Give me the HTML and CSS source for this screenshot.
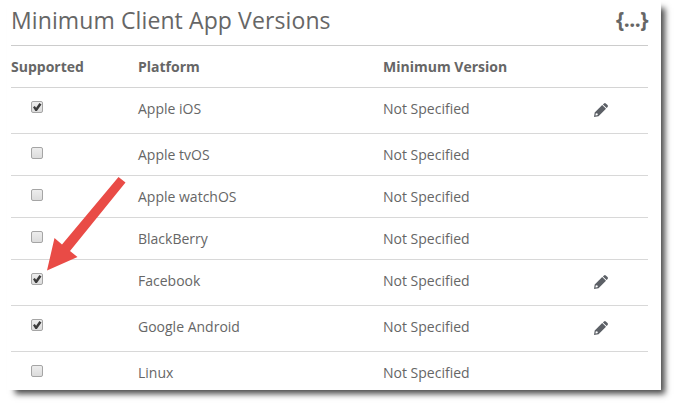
FILE: index.html
```html
<!DOCTYPE html>
<html lang="en">
<head>
<meta charset="utf-8">
<title>Minimum Client App Versions</title>
<link rel="stylesheet" href="styles.css">
</head>
<body>
<svg class="defs" width="0" height="0" aria-hidden="true">
  <symbol id="pencil" viewBox="0 0 14 14">
    <path fill-rule="evenodd" d="M0 14 L.7 9.4 L8.2 2 L12 5.8 L4.5 13.3 Z M1.9 10.2 L1.4 12.2 L1.9 12.6 L3.8 12 L3.5 10.6 Z M8.9 1.4 L10 .4 Q11 -.3 11.8 .4 L13.5 2.1 Q14.3 3 13.6 3.9 L12.6 5.1 Z"/>
  </symbol>
</svg>
<main class="card">
  <header class="head">
    <h1>Minimum Client App Versions</h1>
    <span class="json">{...}</span>
  </header>
  <div class="row labels"><span>Supported</span><span>Platform</span><span>Minimum Version</span></div>
  <div class="row tall"><input type="checkbox" checked><span>Apple iOS</span><span>Not Specified</span><svg class="edit"><use href="#pencil"/></svg></div>
  <div class="row"><input type="checkbox"><span>Apple tvOS</span><span>Not Specified</span></div>
  <div class="row"><input type="checkbox"><span>Apple watchOS</span><span>Not Specified</span></div>
  <div class="row"><input type="checkbox"><span>BlackBerry</span><span>Not Specified</span></div>
  <div class="row tall"><input type="checkbox" checked><span>Facebook</span><span>Not Specified</span><svg class="edit"><use href="#pencil"/></svg></div>
  <div class="row tall"><input type="checkbox" checked><span>Google Android</span><span>Not Specified</span><svg class="edit"><use href="#pencil"/></svg></div>
  <div class="row last"><input type="checkbox"><span>Linux</span><span>Not Specified</span></div>
  <svg class="arrow" viewBox="0 0 80 95"><path d="M72.5 1 L79.5 6.5 L24 75 L31.5 81 L1 94.5 L8.5 62 L16 68.5 Z"/></svg>
</main>
</body>
</html>
```
FILE: styles.css
```css
* { box-sizing: border-box; }
body {
  margin: 0;
  height: 405px;
  overflow: hidden;
  background: #fff;
  color: #666;
  font: 14px/20px "Open Sans", sans-serif;
}
.defs { position: absolute; }
.card {
  position: relative;
  width: 654px;
  height: 390px;
  margin-left: 7px;
  padding: 0 13px 0 4px;
  background: #fff;
  box-shadow: 6px 6px 6px -2px rgba(0, 0, 0, .7);
}
.head {
  display: flex;
  justify-content: space-between;
  height: 46px;
  border-bottom: 1px solid #ccc;
}
h1 {
  margin: 0;
  padding-top: 5px;
  font-size: 23px;
  line-height: 30px;
  font-weight: 400;
  letter-spacing: .11px;
}
.json {
  padding-top: 4px;
  font-size: 21px;
  line-height: 30px;
  font-weight: 700;
  letter-spacing: -.5px;
}
.row {
  display: grid;
  grid-template-columns: 127px 245px 210px 1fr;
  align-items: start;
  height: 42px;
  padding-top: 11px;
  border-bottom: 1px solid #d8d8d8;
}
.tall { height: 46px; }
.last { height: 38px; border: 0; }
.labels { font-weight: 700; border-color: #d4d4d4; }
input {
  appearance: none;
  display: grid;
  width: 12px;
  height: 12px;
  margin: 2px 0 0 20px;
  border: 1px solid #a5a5a5;
  border-radius: 2px;
  background: linear-gradient(#ededed, #dcdcdc);
}
input:checked::before {
  content: "";
  width: 10px;
  height: 10px;
  background: #3b3b3b;
  clip-path: polygon(10% 52%, 28% 40%, 41% 57%, 74% 10%, 95% 24%, 49% 90%, 34% 90%);
}
.edit { width: 14px; height: 14px; margin: 4px 0 0 1px; fill: #5c6066; }
.arrow {
  position: absolute;
  left: 39px;
  top: 176px;
  width: 80px;
  height: 95px;
  fill: #e94b46;
}
```
